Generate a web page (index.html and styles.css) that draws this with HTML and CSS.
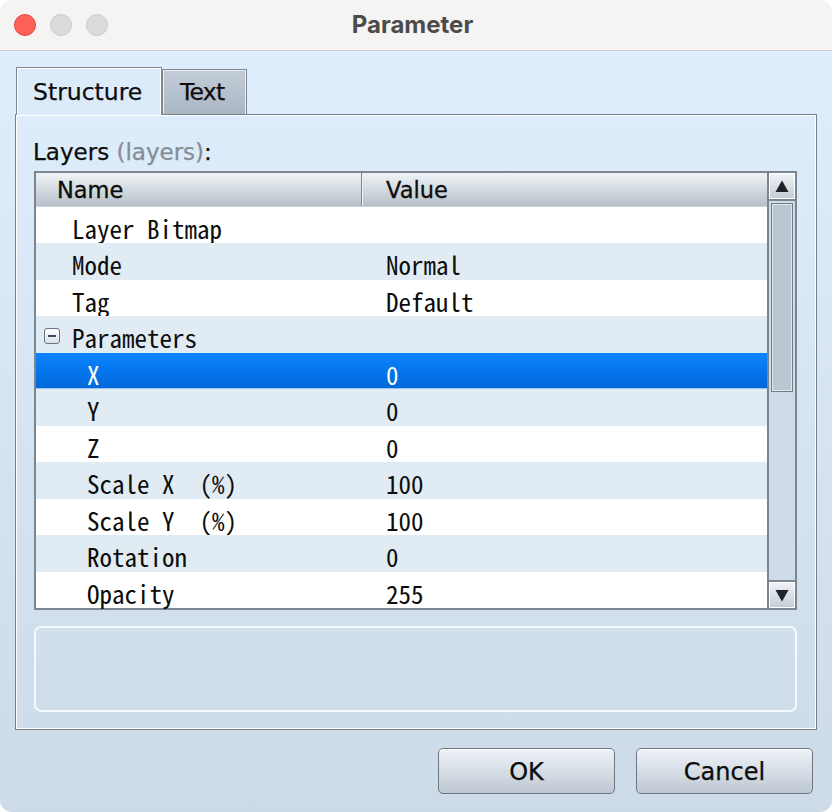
FILE: index.html
```html
<!DOCTYPE html>
<html>
<head>
<meta charset="utf-8">
<link rel="stylesheet" href="styles.css">
</head>
<body>
<div class="window">
  <div class="titlebar">
    <div class="lights"><span class="light red"></span><span class="light"></span><span class="light"></span></div>
    <div class="title">Parameter</div>
    <div></div>
  </div>
  <div class="body">
    <div class="tabs">
      <div class="tab active">Structure</div>
      <div class="tab inactive">Text</div>
    </div>
    <div class="pane">
      <div class="label">Layers <span class="muted">(layers)</span>:</div>
      <div class="table">
        <div class="list">
          <div class="header">
            <div class="hcell hname">Name</div>
            <div class="hcell hvalue">Value</div>
          </div>
          <div class="rows">
            <div class="row"><span class="n l0">Layer Bitmap</span><span class="v"></span></div>
            <div class="row alt"><span class="n l0">Mode</span><span class="v">Normal</span></div>
            <div class="row"><span class="n l0">Tag</span><span class="v">Default</span></div>
            <div class="row alt"><span class="n lg"><span class="toggle"><span class="minus"></span></span>Parameters</span><span class="v"></span></div>
            <div class="row sel"><span class="n l1">X</span><span class="v">0</span></div>
            <div class="row alt"><span class="n l1">Y</span><span class="v">0</span></div>
            <div class="row"><span class="n l1">Z</span><span class="v">0</span></div>
            <div class="row alt"><span class="n l1">Scale X  (%)</span><span class="v">100</span></div>
            <div class="row"><span class="n l1">Scale Y  (%)</span><span class="v">100</span></div>
            <div class="row alt"><span class="n l1">Rotation</span><span class="v">0</span></div>
            <div class="row"><span class="n l1">Opacity</span><span class="v">255</span></div>
          </div>
        </div>
        <div class="scrollbar">
          <div class="sbtn up"><svg width="14" height="12" viewBox="0 0 14 12"><polygon points="7,0.5 13.5,12 0.5,12" fill="#1f2328"/></svg></div>
          <div class="track"><div class="thumb"></div></div>
          <div class="sbtn down"><svg width="14" height="12" viewBox="0 0 14 12"><polygon points="0.5,0 13.5,0 7,11.5" fill="#1f2328"/></svg></div>
        </div>
      </div>
      <div class="desc"></div>
    </div>
    <div class="buttons">
      <button class="btn">OK</button>
      <button class="btn">Cancel</button>
    </div>
  </div>
</div>
</body>
</html>
```

FILE: styles.css
```css
html, body {
  margin: 0;
  padding: 0;
  background: #ffffff;
}

.window {
  width: 832px;
  height: 812px;
  border-radius: 12px;
  overflow: hidden;
  display: flex;
  flex-direction: column;
  font-family: "DejaVu Sans", "Liberation Sans", sans-serif;
  color: #0c0c0c;
}

.titlebar {
  height: 51px;
  box-sizing: border-box;
  background: #f6f4f3;
  border-bottom: 1px solid #cccccc;
  display: grid;
  grid-template-columns: 1fr auto 1fr;
  align-items: center;
}

.lights {
  display: flex;
  gap: 14px;
  padding-left: 14px;
}

.light {
  width: 22px;
  height: 22px;
  box-sizing: border-box;
  border-radius: 50%;
  background: #dcdbda;
  border: 1px solid #cdcccb;
}

.light.red {
  background: #fe5f57;
  border-color: #e2463f;
}

.title {
  font-family: Inter, "Open Sans", sans-serif;
  font-weight: 700;
  font-size: 24px;
  color: #4b4b4b;
  padding-right: 7px;
  padding-bottom: 1px;
}

.body {
  flex: 1;
  background: linear-gradient(#dfeefd, #cddae7);
  padding: 16px 15px 0 15px;
  display: flex;
  flex-direction: column;
}

.tabs {
  display: flex;
  align-items: flex-end;
  padding-left: 1px;
  height: 47px;
  position: relative;
  z-index: 2;
}

.tab {
  box-sizing: border-box;
  font-size: 23.5px;
  -webkit-text-stroke: 0.25px #0c0c0c;
  border: 1px solid #7e8893;
  border-bottom: none;
  display: flex;
  align-items: center;
}

.tab.active {
  width: 146px;
  height: 48px;
  margin-bottom: -1px;
  padding-left: 16px;
  background: #dcebfa;
  box-shadow: inset 1px 1px 0 #ffffff, inset -1px 0 0 #ffffff;
}

.tab.inactive {
  width: 85px;
  height: 45px;
  padding-left: 17px;
  letter-spacing: -0.8px;
  background: linear-gradient(#c2cdd8, #aab6c2);
  box-shadow: inset 1px 1px 0 #e8eef4, inset -1px 0 0 #e8eef4;
}

.pane {
  box-sizing: border-box;
  border: 1px solid #76818c;
  box-shadow: inset 1px 1px 0 #ffffff, inset -1px -1px 0 #ffffff;
  padding: 24px 19px 17px 18px;
  display: flex;
  flex-direction: column;
}

.label {
  font-size: 23px;
  line-height: 26px;
  margin-left: -1px;
  height: 26px;
  -webkit-text-stroke: 0.25px #0c0c0c;
}

.muted {
  color: #858c94;
  -webkit-text-stroke: 0.25px #858c94;
}

.table {
  margin-top: 6px;
  height: 439px;
  box-sizing: border-box;
  border: 2px solid #7c8690;
  display: flex;
}

.list {
  flex: 1;
  display: flex;
  flex-direction: column;
  background: #ffffff;
}

.header {
  height: 35px;
  box-sizing: border-box;
  background: linear-gradient(#eff3f7, #b6c0c9);
  border-bottom: 1px solid #cad1d8;
  display: grid;
  grid-template-columns: 326px 1fr;
}

.hcell {
  font-size: 22.5px;
  -webkit-text-stroke: 0.3px #0c0c0c;
  display: flex;
  align-items: center;
  padding-top: 2px;
}

.hname {
  padding-left: 21px;
  border-right: 1px solid #7e8892;
  box-shadow: 1px 0 0 #eef2f6;
}

.hvalue {
  padding-left: 24px;
}

.rows {
  display: flex;
  flex-direction: column;
}

.row {
  height: 36.5px;
  box-sizing: border-box;
  padding-top: 3px;
  display: grid;
  grid-template-columns: 326px 1fr;
  align-items: center;
  font-family: "Noto Sans Mono CJK JP", "DejaVu Sans Mono", monospace;
  font-size: 25px;
  white-space: pre;
  background: #ffffff;
  color: #0c0c0c;
}

.row.alt {
  background: #e1ebf3;
}

.row.sel {
  background: linear-gradient(#0a84ff, #0067d8);
  color: #ffffff;
  box-shadow: inset 0 -1px 0 #9cc4ee;
}

.n {
  display: flex;
  align-items: center;
}

.n.l0 {
  padding-left: 36px;
}

.n.l1 {
  padding-left: 51px;
}

.n.lg {
  padding-left: 8px;
}

.v {
  padding-left: 24px;
}

.toggle {
  width: 16px;
  height: 16px;
  box-sizing: border-box;
  border: 1px solid #6d7680;
  border-radius: 3px;
  background: linear-gradient(#ffffff, #d9e1e8);
  margin-right: 12px;
  margin-top: -3px;
  display: flex;
  align-items: center;
  justify-content: center;
}

.minus {
  width: 8px;
  height: 2px;
  background: #3b4a5c;
}

.scrollbar {
  width: 28px;
  box-sizing: border-box;
  border-left: 2px solid #7c8690;
  background: #cfdbe7;
  display: flex;
  flex-direction: column;
}

.sbtn {
  height: 28px;
  box-sizing: border-box;
  background: linear-gradient(#f1f4f7, #c3ccd5);
  box-shadow: inset 1px 1px 0 #ffffff, inset -1px -1px 0 #ffffff;
  display: flex;
  align-items: center;
  justify-content: center;
}

.sbtn.up {
  border-bottom: 2px solid #7c8690;
  padding-bottom: 1px;
}

.sbtn.down {
  border-top: 2px solid #7c8690;
  padding-top: 1px;
}

.track {
  flex: 1;
  padding: 2px 2px 0 2px;
}

.thumb {
  height: 189px;
  box-sizing: border-box;
  border: 1px solid #737e89;
  box-shadow: inset 0 0 0 1px #dfe6ed;
  background: #bac6d2;
}

.desc {
  margin-top: 16px;
  height: 86px;
  box-sizing: border-box;
  border: 2px solid #f6f9fc;
  border-radius: 7px;
}

.buttons {
  display: flex;
  justify-content: flex-end;
  gap: 21px;
  margin-top: 18px;
  padding-right: 4px;
}

.btn {
  width: 177px;
  height: 46px;
  box-sizing: border-box;
  border: 1px solid #6e7781;
  border-radius: 5px;
  background: linear-gradient(#eef3f8, #bec8d2);
  box-shadow: inset 0 1px 0 #ffffff;
  font-family: "DejaVu Sans", sans-serif;
  font-size: 24px;
  -webkit-text-stroke: 0.25px #0c0c0c;
  color: #0c0c0c;
  padding: 1px 0 0 0;
}
```
